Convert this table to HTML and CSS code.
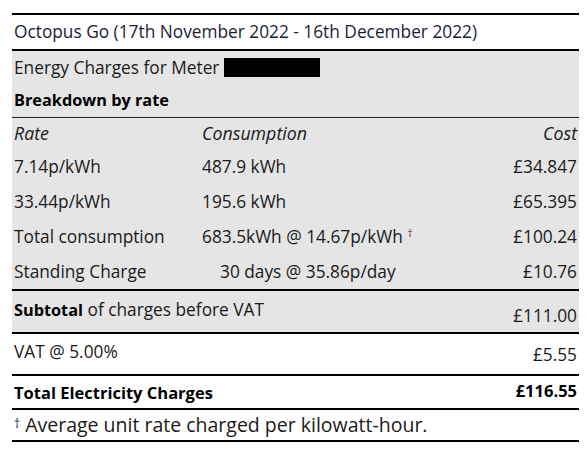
FILE: index.html
```html
<!DOCTYPE html>
<html>
<head>
<meta charset="utf-8">
<link rel="stylesheet" href="styles.css">
</head>
<body>
<div class="doc">
  <div class="title">Octopus Go (17th November 2022 - 16th December 2022)</div>
  <div class="meter">
    <div class="meter-head">Energy Charges for Meter <span class="redact"></span></div>
    <div class="breakdown">Breakdown by rate</div>
    <div class="rates">
      <div class="rrow hdr"><span>Rate</span><span>Consumption</span><span class="cost">Cost</span></div>
      <div class="rrow"><span>7.14p/kWh</span><span>487.9 kWh</span><span class="cost">£34.847</span></div>
      <div class="rrow"><span>33.44p/kWh</span><span>195.6 kWh</span><span class="cost">£65.395</span></div>
      <div class="rrow"><span>Total consumption</span><span>683.5kWh @ 14.67p/kWh <sup class="dag">†</sup></span><span class="cost">£100.24</span></div>
      <div class="rrow"><span>Standing Charge</span><span class="sc">30 days @ 35.86p/day</span><span class="cost">£10.76</span></div>
    </div>
  </div>
  <div class="sum subtotal"><span class="lbl"><b>Subtotal</b> of charges before VAT</span><span class="amt">£111.00</span></div>
  <div class="sum vat"><span class="lbl">VAT @ 5.00%</span><span class="amt">£5.55</span></div>
  <div class="sum total"><span class="lbl">Total Electricity Charges</span><span class="amt">£116.55</span></div>
  <div class="foot"><sup class="fdag">†</sup> Average unit rate charged per kilowatt-hour.</div>
</div>
</body>
</html>
```

FILE: styles.css
```css
html, body { margin: 0; padding: 0; background: #fff; }
body {
  font-family: "Open Sans", "DejaVu Sans", sans-serif;
  color: #1a1a1a;
  font-size: 17.3px;
}
.doc {
  margin: 13px 8px 0 12px;
  width: 567px;
}
.title {
  border-top: 2px solid #000;
  border-bottom: 2px solid #000;
  height: 34px;
  line-height: 34px;
  padding-left: 2px;
  color: #1b1d33;
}
.meter {
  background: #e5e5e5;
  border-bottom: 2px solid #000;
}
.meter-head {
  height: 33px;
  line-height: 33px;
  padding-left: 2px;
  display: flex;
  align-items: center;
  gap: 5px;
}
.redact {
  display: inline-block;
  width: 96px;
  height: 19px;
  background: #000;
}
.breakdown {
  height: 33px;
  line-height: 33px;
  padding-left: 2px;
  font-weight: 700;
  font-size: 16.3px;
  color: #000;
  border-bottom: 1px solid #222;
}
.rrow {
  display: grid;
  grid-template-columns: 188px 1fr auto;
  height: 35px;
  line-height: 35px;
  padding: 0 2px;
}
.rrow.hdr {
  height: 31px;
  line-height: 31px;
  font-style: italic;
  font-size: 17.8px;
}
.cost { text-align: right; }
.sc { padding-left: 18px; }
.dag {
  font-size: 11px;
  color: #6e1a3a;
  vertical-align: 0;
  position: relative;
  top: -6px;
}
.sum {
  display: flex;
  justify-content: space-between;
  align-items: flex-start;
  padding: 0 2px;
  border-bottom: 2px solid #000;
}
.sum .lbl, .sum .amt { line-height: 20px; }
.subtotal {
  background: #e5e5e5;
  height: 41px;
}
.subtotal b { font-size: 16.3px; color: #000; }
.subtotal .lbl { margin-top: 9px; }
.subtotal .amt { margin-top: 15px; }
.vat { height: 40px; }
.vat .lbl { margin-top: 8px; }
.vat .amt { margin-top: 11px; }
.total { height: 32px; font-weight: 700; color: #000; font-size: 16.5px; }
.total .lbl { margin-top: 7px; }
.total .amt { margin-top: 5px; }
.foot {
  height: 30px;
  line-height: 30px;
  padding-left: 2px;
  font-size: 19.5px;
  border-bottom: 2px solid #000;
}
.fdag {
  font-size: 12px;
  position: relative;
  top: -4px;
  vertical-align: 0;
  color: #222;
}
```
